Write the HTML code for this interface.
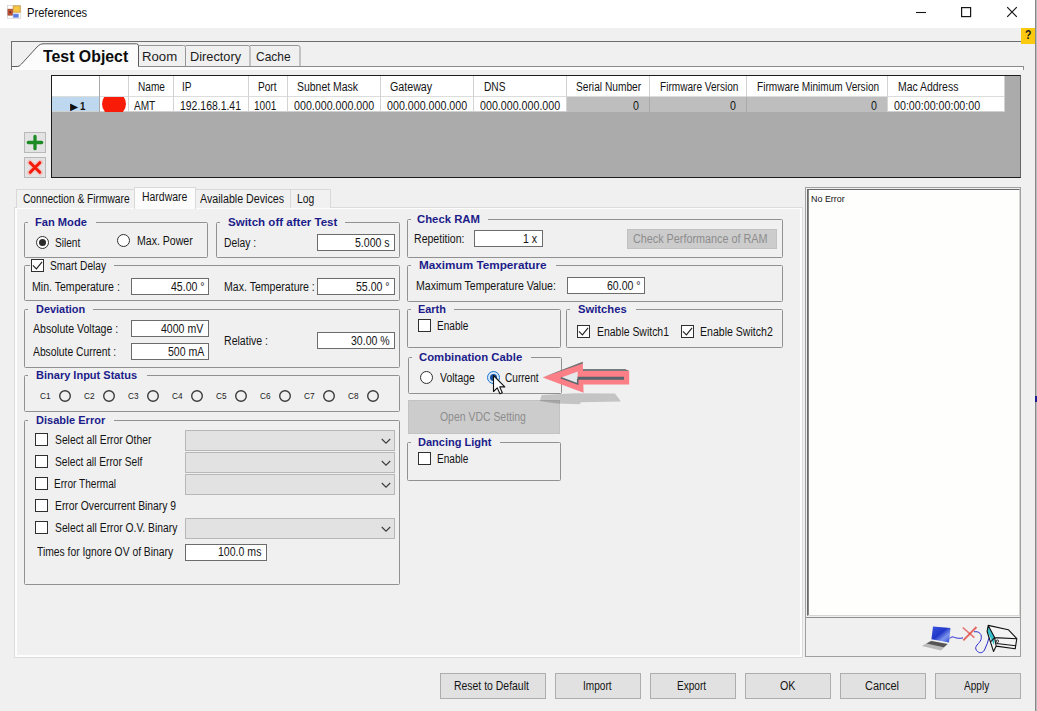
<!DOCTYPE html>
<html><head><meta charset="utf-8"><title>Preferences</title>
<style>
*{box-sizing:border-box;margin:0;padding:0}
html,body{width:1037px;height:711px;overflow:hidden}
body{position:relative;background:#f0f0f0;font-family:"Liberation Sans",sans-serif;font-size:12px;color:#141414}
.a{position:absolute}
.t{position:absolute;white-space:nowrap}
</style></head><body>
<div class="a" style="left:0px;top:0px;width:1037px;height:28px;background:#fff"></div>
<svg class="a" style="left:7px;top:5px" width="15" height="14" viewBox="7 5 15 14">
<rect x="7.500" y="5.500" width="13.200" height="12.800" fill="#fdfdfd" stroke="#d4d4d4" stroke-width="0.800"/>
<rect x="13.200" y="5.900" width="7" height="6.300" fill="#f6c740" stroke="#d09a48" stroke-width="0.900"/>
<rect x="8" y="9.300" width="4.300" height="5.800" fill="#d9552c" stroke="#9a4a30" stroke-width="0.900"/>
<rect x="9.300" y="11" width="1.800" height="2.400" fill="#6a3030"/>
<rect x="13.200" y="14" width="5.300" height="3.400" fill="#5a7be0" stroke="#8a9ae0" stroke-width="0.600"/>
</svg>
<div class="t" style="top:6px;font-size:12px;line-height:14px;height:14px;color:#111;left:27.3px;transform:scaleX(0.93);transform-origin:0 0;">Preferences</div>
<svg class="a" style="left:900px;top:0" width="135" height="28" viewBox="900 0 135 28">
<path d="M916 12.500h10" stroke="#161616" stroke-width="1.100" fill="none"/>
<rect x="961.600" y="7.600" width="9" height="9" stroke="#161616" stroke-width="1.200" fill="none"/>
<path d="M1007.200 7.200l9.600 9.600M1016.800 7.200l-9.600 9.600" stroke="#161616" stroke-width="1.200" fill="none"/>
</svg>
<div class="a" style="left:1035px;top:0px;width:1px;height:711px;background:#888"></div>
<div class="a" style="left:1036px;top:0px;width:1px;height:711px;background:#bcbcbc"></div>
<div class="a" style="left:1035px;top:396px;width:2px;height:6px;background:#1a1a90"></div>
<div class="a" style="left:1021px;top:28px;width:14px;height:16px;background:#fbca10"></div>
<div class="t" style="top:28px;font-size:12.5px;line-height:14px;height:14px;font-weight:bold;color:#1a1a1a;left:1024.69px;transform:scaleX(0.84);transform-origin:0 0;">?</div>
<div class="a" style="left:11px;top:41px;width:1010px;height:1px;background:#6e6e6e"></div>
<div class="a" style="left:11px;top:41px;width:1px;height:29px;background:#6e6e6e"></div>
<div class="a" style="left:12px;top:66px;width:1012px;height:4px;background:#fbfbfb"></div>
<div class="a" style="left:12px;top:66px;width:1012px;height:1px;background:#8c8c8c"></div>
<div class="a" style="left:1023px;top:66px;width:1px;height:4px;background:#8c8c8c"></div>
<svg class="a" style="left:11px;top:41px" width="300" height="29" viewBox="0 0 300 29">
<path d="M1 25.500H5C8 25.500 8.500 25 10.500 23L26 6C28.500 3.500 30 2.800 33 2.800H127.500V29H1Z" fill="#fcfcfc"/>
<path d="M1 25.500H5C8 25.500 8.500 25 10.500 23L26 6C28.500 3.500 30 2.800 33 2.800H125.500Q127.500 2.800 127.500 5V25.500" fill="none" stroke="#5a5a5a" stroke-width="1"/>
<path d="M127.500 4.500H172.500Q174.500 4.500 174.500 6.500V25" fill="none" stroke="#969696"/>
<path d="M174.500 4.500H237Q239 4.500 239 6.500V25" fill="none" stroke="#969696"/>
<path d="M239 4.500H287Q289 4.500 289 6.500V25" fill="none" stroke="#969696"/>
</svg>
<div class="t" style="top:47px;font-size:16.2px;line-height:18px;height:18px;font-weight:bold;color:#0c0c0c;left:43.3px;transform:scaleX(0.98);transform-origin:0 0;">Test Object</div>
<div class="t" style="top:49px;font-size:13.6px;line-height:15px;height:15px;color:#1c1c1c;left:142.3px;transform:scaleX(0.97);transform-origin:0 0;">Room</div>
<div class="t" style="top:49px;font-size:13.6px;line-height:15px;height:15px;color:#1c1c1c;left:189.7px;transform:scaleX(0.94);transform-origin:0 0;">Directory</div>
<div class="t" style="top:49px;font-size:13.6px;line-height:15px;height:15px;color:#1c1c1c;left:255.8px;transform:scaleX(0.88);transform-origin:0 0;">Cache</div>
<div class="a" style="left:51px;top:75px;width:970px;height:103px;background:#ababab;border:1px solid #1c1c1c;border-right-color:#666"></div>
<div class="a" style="left:52px;top:76px;width:953px;height:36px;background:#fff"></div>
<div class="a" style="left:52px;top:97px;width:47px;height:15px;background:#bed8ef"></div>
<div class="a" style="left:52px;top:96px;width:952px;height:1px;background:#dcdcdc"></div>
<div class="a" style="left:52px;top:111px;width:952px;height:1px;background:#d0d0d0"></div>
<div class="a" style="left:99px;top:76px;width:1px;height:36px;background:#a9a9a9"></div>
<div class="a" style="left:128px;top:76px;width:1px;height:36px;background:#d3d3d3"></div>
<div class="a" style="left:173px;top:76px;width:1px;height:36px;background:#d3d3d3"></div>
<div class="a" style="left:248px;top:76px;width:1px;height:36px;background:#d3d3d3"></div>
<div class="a" style="left:287px;top:76px;width:1px;height:36px;background:#d3d3d3"></div>
<div class="a" style="left:380px;top:76px;width:1px;height:36px;background:#d3d3d3"></div>
<div class="a" style="left:473px;top:76px;width:1px;height:36px;background:#d3d3d3"></div>
<div class="a" style="left:566px;top:76px;width:1px;height:36px;background:#d3d3d3"></div>
<div class="a" style="left:649px;top:76px;width:1px;height:36px;background:#d3d3d3"></div>
<div class="a" style="left:746px;top:76px;width:1px;height:36px;background:#d3d3d3"></div>
<div class="a" style="left:887px;top:76px;width:1px;height:36px;background:#d3d3d3"></div>
<div class="a" style="left:1004px;top:76px;width:1px;height:36px;background:#d3d3d3"></div>
<div class="a" style="left:567px;top:97px;width:320px;height:15px;background:#bebebe"></div>
<div class="a" style="left:649px;top:97px;width:1px;height:15px;background:#a9a9a9"></div>
<div class="a" style="left:746px;top:97px;width:1px;height:15px;background:#a9a9a9"></div>
<div class="a" style="left:101px;top:96.500px;width:26px;height:15.500px;overflow:hidden"><div style="margin:-4.500px 0 0 0.800px;width:24.400px;height:24.400px;background:#f81c08;border-radius:50%"></div></div>
<div class="t" style="top:101px;font-size:10px;line-height:11px;height:11px;color:#111;left:70px;transform:scaleX(1.06);transform-origin:0 0;">▶</div>
<div class="t" style="top:100px;font-size:11.5px;line-height:12px;height:12px;font-weight:bold;color:#111;left:79.71px;transform:scaleX(0.84);transform-origin:0 0;">1</div>
<div class="t" style="top:80px;font-size:12px;line-height:14px;height:14px;left:138.11px;transform:scaleX(0.84);transform-origin:0 0;">Name</div>
<div class="t" style="top:80px;font-size:12px;line-height:14px;height:14px;left:182.13px;transform:scaleX(0.84);transform-origin:0 0;">IP</div>
<div class="t" style="top:80px;font-size:12px;line-height:14px;height:14px;left:257.64px;transform:scaleX(0.84);transform-origin:0 0;">Port</div>
<div class="t" style="top:80px;font-size:12px;line-height:14px;height:14px;left:297px;transform:scaleX(0.87);transform-origin:0 0;">Subnet Mask</div>
<div class="t" style="top:80px;font-size:12px;line-height:14px;height:14px;left:389.5px;transform:scaleX(0.89);transform-origin:0 0;">Gateway</div>
<div class="t" style="top:80px;font-size:12px;line-height:14px;height:14px;left:483.5px;transform:scaleX(0.85);transform-origin:0 0;">DNS</div>
<div class="t" style="top:80px;font-size:12px;line-height:14px;height:14px;left:576.3px;transform:scaleX(0.85);transform-origin:0 0;">Serial Number</div>
<div class="t" style="top:80px;font-size:12px;line-height:14px;height:14px;left:659.5px;transform:scaleX(0.84);transform-origin:0 0;">Firmware Version</div>
<div class="t" style="top:80px;font-size:12px;line-height:14px;height:14px;left:756.75px;transform:scaleX(0.84);transform-origin:0 0;">Firmware Minimum Version</div>
<div class="t" style="top:80px;font-size:12px;line-height:14px;height:14px;left:897.8px;transform:scaleX(0.87);transform-origin:0 0;">Mac Address</div>
<div class="t" style="top:99px;font-size:12px;line-height:14px;height:14px;left:134.23px;transform:scaleX(0.84);transform-origin:0 0;">AMT</div>
<div class="t" style="top:99px;font-size:12px;line-height:14px;height:14px;left:179.6px;transform:scaleX(0.87);transform-origin:0 0;">192.168.1.41</div>
<div class="t" style="top:99px;font-size:12px;line-height:14px;height:14px;left:254.11px;transform:scaleX(0.84);transform-origin:0 0;">1001</div>
<div class="t" style="top:99px;font-size:12px;line-height:14px;height:14px;left:293.8px;transform:scaleX(0.89);transform-origin:0 0;">000.000.000.000</div>
<div class="t" style="top:99px;font-size:12px;line-height:14px;height:14px;left:387px;transform:scaleX(0.89);transform-origin:0 0;">000.000.000.000</div>
<div class="t" style="top:99px;font-size:12px;line-height:14px;height:14px;left:479.9px;transform:scaleX(0.89);transform-origin:0 0;">000.000.000.000</div>
<div class="t" style="top:99px;font-size:12px;line-height:14px;height:14px;left:633.3px;transform:scaleX(0.89);transform-origin:0 0;">0</div>
<div class="t" style="top:99px;font-size:12px;line-height:14px;height:14px;left:730px;transform:scaleX(0.89);transform-origin:0 0;">0</div>
<div class="t" style="top:99px;font-size:12px;line-height:14px;height:14px;left:871.1px;transform:scaleX(0.89);transform-origin:0 0;">0</div>
<div class="t" style="top:99px;font-size:12px;line-height:14px;height:14px;left:893.5px;transform:scaleX(0.89);transform-origin:0 0;">00:00:00:00:00:00</div>
<div class="a" style="left:24px;top:132px;width:22px;height:21px;background:#e3e3e3;border:1px solid #b9b9b9"></div>
<svg class="a" style="left:24px;top:132px" width="22" height="21" viewBox="0 0 22 21"><path d="M11 4.300v12.400M4.300 10.500h13.400" stroke="#1d8c25" stroke-width="3.300" stroke-linecap="round" fill="none"/></svg>
<div class="a" style="left:24px;top:157px;width:22px;height:21px;background:#e3e3e3;border:1px solid #b9b9b9"></div>
<svg class="a" style="left:24px;top:157px" width="22" height="21" viewBox="0 0 22 21"><path d="M5.800 5.300l10.400 10.400M16.200 5.300l-10.400 10.400" stroke="#ff9a9a" stroke-opacity="0.450" stroke-width="5.400" stroke-linecap="round" fill="none"/><path d="M6.200 5.700l9.600 9.600M15.800 5.700l-9.600 9.600" stroke="#f41a08" stroke-width="3" stroke-linecap="round" fill="none"/></svg>
<div class="a" style="left:14px;top:207px;width:789px;height:451px;border:1px solid #dcdcdc;background:#f0f0f0"></div>
<div class="a" style="left:15px;top:208px;width:787px;height:449px;border:2px solid #fdfdfd;border-top-width:1px"></div>
<div class="a" style="left:16px;top:189px;width:119px;height:19px;background:#f1f1f1;border:1px solid #d9d9d9;border-bottom:none"></div>
<div class="a" style="left:195px;top:189px;width:96px;height:19px;background:#f1f1f1;border:1px solid #d9d9d9;border-bottom:none"></div>
<div class="a" style="left:290px;top:189px;width:41px;height:19px;background:#f1f1f1;border:1px solid #d9d9d9;border-bottom:none"></div>
<div class="a" style="left:134px;top:187px;width:62px;height:22px;background:#fcfcfc;border:1px solid #d9d9d9;border-bottom:none"></div>
<div class="t" style="top:192px;font-size:12px;line-height:14px;height:14px;left:23.3px;transform:scaleX(0.85);transform-origin:0 0;">Connection &amp; Firmware</div>
<div class="t" style="top:190px;font-size:12px;line-height:14px;height:14px;left:142.3px;transform:scaleX(0.87);transform-origin:0 0;">Hardware</div>
<div class="t" style="top:192px;font-size:12px;line-height:14px;height:14px;left:200px;transform:scaleX(0.89);transform-origin:0 0;">Available Devices</div>
<div class="t" style="top:192px;font-size:12px;line-height:14px;height:14px;left:297.3px;transform:scaleX(0.86);transform-origin:0 0;">Log</div>
<div class="a" style="left:24px;top:222px;width:184px;height:36px;border:1px solid #919191;border-radius:1.5px"></div>
<div class="a" style="left:28px;top:221px;width:68px;height:3px;background:#f0f0f0"></div>
<div class="t" style="top:217px;font-size:10.3px;line-height:11px;height:11px;font-weight:bold;color:#1c1c8a;left:35.3px;transform:scaleX(1.08);transform-origin:0 0;">Fan Mode</div>
<div class="a" style="left:36px;top:235.8px;width:13px;height:13px;background:#fff;border:1px solid #2f2f2f;border-radius:50%"></div>
<div class="a" style="left:39px;top:238.8px;width:7px;height:7px;background:#2a2a2a;border-radius:50%"></div>
<div class="t" style="top:236px;font-size:12px;line-height:14px;height:14px;left:54.73px;transform:scaleX(0.84);transform-origin:0 0;">Silent</div>
<div class="a" style="left:117px;top:234px;width:13px;height:13px;background:#fff;border:1px solid #2f2f2f;border-radius:50%"></div>
<div class="t" style="top:234px;font-size:12px;line-height:14px;height:14px;left:136.6px;transform:scaleX(0.88);transform-origin:0 0;">Max. Power</div>
<div class="a" style="left:216px;top:222px;width:184px;height:36px;border:1px solid #919191;border-radius:1.5px"></div>
<div class="a" style="left:220px;top:221px;width:125px;height:3px;background:#f0f0f0"></div>
<div class="t" style="top:217px;font-size:10.3px;line-height:11px;height:11px;font-weight:bold;color:#1c1c8a;left:228.2px;transform:scaleX(1.12);transform-origin:0 0;">Switch off after Test</div>
<div class="t" style="top:236px;font-size:12px;line-height:14px;height:14px;left:223.8px;transform:scaleX(0.86);transform-origin:0 0;">Delay :</div>
<div class="a" style="left:317px;top:234px;width:78px;height:17px;background:#fff;border:1px solid #6c6c6c"></div>
<div class="t" style="top:236px;font-size:12px;line-height:14px;height:14px;left:355.08px;transform:scaleX(0.88);transform-origin:0 0;">5.000 s</div>
<div class="a" style="left:24px;top:265px;width:376px;height:36px;border:1px solid #919191;border-radius:1.5px"></div>
<div class="a" style="left:30px;top:264px;width:84px;height:3px;background:#f0f0f0"></div>
<div class="a" style="left:31px;top:259px;width:13px;height:13px;background:#fff;border:1px solid #2f2f2f"></div>
<svg class="a" style="left:31px;top:259px" width="13" height="13" viewBox="0 0 13 13"><path d="M1.900 6.400L5.400 9.800L11.100 2.800" fill="none" stroke="#222" stroke-width="1.150"/></svg>
<div class="t" style="top:259px;font-size:12px;line-height:14px;height:14px;left:50.4px;transform:scaleX(0.85);transform-origin:0 0;">Smart Delay</div>
<div class="t" style="top:280px;font-size:12px;line-height:14px;height:14px;left:31.5px;transform:scaleX(0.88);transform-origin:0 0;">Min. Temperature :</div>
<div class="a" style="left:131px;top:278px;width:78px;height:17px;background:#fff;border:1px solid #6c6c6c"></div>
<div class="t" style="top:280px;font-size:12px;line-height:14px;height:14px;left:170.76px;transform:scaleX(0.88);transform-origin:0 0;">45.00 °</div>
<div class="t" style="top:280px;font-size:12px;line-height:14px;height:14px;left:223.8px;transform:scaleX(0.88);transform-origin:0 0;">Max. Temperature :</div>
<div class="a" style="left:317px;top:278px;width:78px;height:17px;background:#fff;border:1px solid #6c6c6c"></div>
<div class="t" style="top:280px;font-size:12px;line-height:14px;height:14px;left:355.96px;transform:scaleX(0.88);transform-origin:0 0;">55.00 °</div>
<div class="a" style="left:24px;top:309px;width:376px;height:59px;border:1px solid #919191;border-radius:1.5px"></div>
<div class="a" style="left:28px;top:308px;width:64.5px;height:3px;background:#f0f0f0"></div>
<div class="t" style="top:304px;font-size:10.3px;line-height:11px;height:11px;font-weight:bold;color:#1c1c8a;left:35.5px;transform:scaleX(1.06);transform-origin:0 0;">Deviation</div>
<div class="t" style="top:322px;font-size:12px;line-height:14px;height:14px;left:33.3px;transform:scaleX(0.88);transform-origin:0 0;">Absolute Voltage :</div>
<div class="a" style="left:131px;top:320px;width:78px;height:17px;background:#fff;border:1px solid #6c6c6c"></div>
<div class="t" style="top:322px;font-size:12px;line-height:14px;height:14px;left:161.46px;transform:scaleX(0.88);transform-origin:0 0;">4000 mV</div>
<div class="t" style="top:345px;font-size:12px;line-height:14px;height:14px;left:33.3px;transform:scaleX(0.86);transform-origin:0 0;">Absolute Current :</div>
<div class="a" style="left:131px;top:343px;width:78px;height:17px;background:#fff;border:1px solid #6c6c6c"></div>
<div class="t" style="top:345px;font-size:12px;line-height:14px;height:14px;left:167.62px;transform:scaleX(0.88);transform-origin:0 0;">500 mA</div>
<div class="t" style="top:334px;font-size:12px;line-height:14px;height:14px;left:223.5px;transform:scaleX(0.88);transform-origin:0 0;">Relative :</div>
<div class="a" style="left:317px;top:332px;width:78px;height:17px;background:#fff;border:1px solid #6c6c6c"></div>
<div class="t" style="top:334px;font-size:12px;line-height:14px;height:14px;left:350.68px;transform:scaleX(0.88);transform-origin:0 0;">30.00 %</div>
<div class="a" style="left:24px;top:375px;width:376px;height:37px;border:1px solid #919191;border-radius:1.5px"></div>
<div class="a" style="left:28px;top:374px;width:118.5px;height:3px;background:#f0f0f0"></div>
<div class="t" style="top:370px;font-size:10.3px;line-height:11px;height:11px;font-weight:bold;color:#1c1c8a;left:35.5px;transform:scaleX(1.07);transform-origin:0 0;">Binary Input Status</div>
<div class="t" style="top:390px;font-size:9.5px;line-height:11px;height:11px;color:#222;left:40px;transform:scaleX(0.87);transform-origin:0 0;">C1</div>
<svg class="a" style="left:58px;top:389px" width="14" height="14"><circle cx="7" cy="7" r="5.300" fill="none" stroke="#3a3a3a" stroke-width="1.400"/></svg>
<div class="t" style="top:390px;font-size:9.5px;line-height:11px;height:11px;color:#222;left:84px;transform:scaleX(0.87);transform-origin:0 0;">C2</div>
<svg class="a" style="left:102px;top:389px" width="14" height="14"><circle cx="7" cy="7" r="5.300" fill="none" stroke="#3a3a3a" stroke-width="1.400"/></svg>
<div class="t" style="top:390px;font-size:9.5px;line-height:11px;height:11px;color:#222;left:128px;transform:scaleX(0.87);transform-origin:0 0;">C3</div>
<svg class="a" style="left:146px;top:389px" width="14" height="14"><circle cx="7" cy="7" r="5.300" fill="none" stroke="#3a3a3a" stroke-width="1.400"/></svg>
<div class="t" style="top:390px;font-size:9.5px;line-height:11px;height:11px;color:#222;left:172px;transform:scaleX(0.87);transform-origin:0 0;">C4</div>
<svg class="a" style="left:190px;top:389px" width="14" height="14"><circle cx="7" cy="7" r="5.300" fill="none" stroke="#3a3a3a" stroke-width="1.400"/></svg>
<div class="t" style="top:390px;font-size:9.5px;line-height:11px;height:11px;color:#222;left:216px;transform:scaleX(0.87);transform-origin:0 0;">C5</div>
<svg class="a" style="left:234px;top:389px" width="14" height="14"><circle cx="7" cy="7" r="5.300" fill="none" stroke="#3a3a3a" stroke-width="1.400"/></svg>
<div class="t" style="top:390px;font-size:9.5px;line-height:11px;height:11px;color:#222;left:260px;transform:scaleX(0.87);transform-origin:0 0;">C6</div>
<svg class="a" style="left:278px;top:389px" width="14" height="14"><circle cx="7" cy="7" r="5.300" fill="none" stroke="#3a3a3a" stroke-width="1.400"/></svg>
<div class="t" style="top:390px;font-size:9.5px;line-height:11px;height:11px;color:#222;left:304px;transform:scaleX(0.87);transform-origin:0 0;">C7</div>
<svg class="a" style="left:322px;top:389px" width="14" height="14"><circle cx="7" cy="7" r="5.300" fill="none" stroke="#3a3a3a" stroke-width="1.400"/></svg>
<div class="t" style="top:390px;font-size:9.5px;line-height:11px;height:11px;color:#222;left:348px;transform:scaleX(0.87);transform-origin:0 0;">C8</div>
<svg class="a" style="left:366px;top:389px" width="14" height="14"><circle cx="7" cy="7" r="5.300" fill="none" stroke="#3a3a3a" stroke-width="1.400"/></svg>
<div class="a" style="left:24px;top:420px;width:376px;height:165px;border:1px solid #919191;border-radius:1.5px"></div>
<div class="a" style="left:28px;top:419px;width:86px;height:3px;background:#f0f0f0"></div>
<div class="t" style="top:415px;font-size:10.3px;line-height:11px;height:11px;font-weight:bold;color:#1c1c8a;left:35.5px;transform:scaleX(1.07);transform-origin:0 0;">Disable Error</div>
<div class="a" style="left:35px;top:433px;width:13px;height:13px;background:#fff;border:1px solid #2f2f2f"></div>
<div class="t" style="top:433px;font-size:12px;line-height:14px;height:14px;left:54.6px;transform:scaleX(0.86);transform-origin:0 0;">Select all Error Other</div>
<div class="a" style="left:185px;top:430px;width:210px;height:21px;background:#e2e2e2;border:1px solid #b7b7b7"></div>
<svg class="a" style="left:380.9px;top:438px" width="10" height="7" viewBox="0 0 10 7"><path d="M0.800 1L5 5.200L9.200 1" fill="none" stroke="#3c3c3c" stroke-width="1.100"/></svg>
<div class="a" style="left:35px;top:455px;width:13px;height:13px;background:#fff;border:1px solid #2f2f2f"></div>
<div class="t" style="top:455px;font-size:12px;line-height:14px;height:14px;left:54.6px;transform:scaleX(0.85);transform-origin:0 0;">Select all Error Self</div>
<div class="a" style="left:185px;top:452px;width:210px;height:21px;background:#e2e2e2;border:1px solid #b7b7b7"></div>
<svg class="a" style="left:380.9px;top:460px" width="10" height="7" viewBox="0 0 10 7"><path d="M0.800 1L5 5.200L9.200 1" fill="none" stroke="#3c3c3c" stroke-width="1.100"/></svg>
<div class="a" style="left:35px;top:477px;width:13px;height:13px;background:#fff;border:1px solid #2f2f2f"></div>
<div class="t" style="top:477px;font-size:12px;line-height:14px;height:14px;left:54.47px;transform:scaleX(0.84);transform-origin:0 0;">Error Thermal</div>
<div class="a" style="left:185px;top:474px;width:210px;height:21px;background:#e2e2e2;border:1px solid #b7b7b7"></div>
<svg class="a" style="left:380.9px;top:482px" width="10" height="7" viewBox="0 0 10 7"><path d="M0.800 1L5 5.200L9.200 1" fill="none" stroke="#3c3c3c" stroke-width="1.100"/></svg>
<div class="a" style="left:35px;top:499px;width:13px;height:13px;background:#fff;border:1px solid #2f2f2f"></div>
<div class="t" style="top:499px;font-size:12px;line-height:14px;height:14px;left:54.6px;transform:scaleX(0.86);transform-origin:0 0;">Error Overcurrent Binary 9</div>
<div class="a" style="left:35px;top:521px;width:13px;height:13px;background:#fff;border:1px solid #2f2f2f"></div>
<div class="t" style="top:521px;font-size:12px;line-height:14px;height:14px;left:54.6px;transform:scaleX(0.86);transform-origin:0 0;">Select all Error O.V. Binary</div>
<div class="a" style="left:185px;top:518px;width:210px;height:21px;background:#e2e2e2;border:1px solid #b7b7b7"></div>
<svg class="a" style="left:380.9px;top:526px" width="10" height="7" viewBox="0 0 10 7"><path d="M0.800 1L5 5.200L9.200 1" fill="none" stroke="#3c3c3c" stroke-width="1.100"/></svg>
<div class="t" style="top:545px;font-size:12px;line-height:14px;height:14px;left:36.8px;transform:scaleX(0.86);transform-origin:0 0;">Times for Ignore OV of Binary</div>
<div class="a" style="left:185px;top:544px;width:82px;height:17px;background:#fff;border:1px solid #6c6c6c"></div>
<div class="t" style="top:545px;font-size:12px;line-height:14px;height:14px;left:218.28px;transform:scaleX(0.88);transform-origin:0 0;">100.0 ms</div>
<div class="a" style="left:407px;top:219px;width:376px;height:39px;border:1px solid #919191;border-radius:1.5px"></div>
<div class="a" style="left:411px;top:218px;width:77px;height:3px;background:#f0f0f0"></div>
<div class="t" style="top:214px;font-size:10.3px;line-height:11px;height:11px;font-weight:bold;color:#1c1c8a;left:417px;transform:scaleX(1.1);transform-origin:0 0;">Check RAM</div>
<div class="t" style="top:232px;font-size:12px;line-height:14px;height:14px;left:413.8px;transform:scaleX(0.88);transform-origin:0 0;">Repetition:</div>
<div class="a" style="left:474px;top:230px;width:69px;height:17px;background:#fff;border:1px solid #6c6c6c"></div>
<div class="t" style="top:232px;font-size:12px;line-height:14px;height:14px;left:523.22px;transform:scaleX(0.88);transform-origin:0 0;">1 x</div>
<div class="a" style="left:627px;top:229px;width:150px;height:20px;background:#cccccc;border:1px solid #c2c2c2"></div>
<div class="t" style="top:232px;font-size:12px;line-height:14px;height:14px;color:#8c8c8c;left:633.2px;transform:scaleX(0.9);transform-origin:0 0;">Check Performance of RAM</div>
<div class="a" style="left:407px;top:265px;width:376px;height:37px;border:1px solid #919191;border-radius:1.5px"></div>
<div class="a" style="left:411px;top:264px;width:144.5px;height:3px;background:#f0f0f0"></div>
<div class="t" style="top:260px;font-size:10.3px;line-height:11px;height:11px;font-weight:bold;color:#1c1c8a;left:418.8px;transform:scaleX(1.14);transform-origin:0 0;">Maximum Temperature</div>
<div class="t" style="top:279px;font-size:12px;line-height:14px;height:14px;left:415.5px;transform:scaleX(0.88);transform-origin:0 0;">Maximum Temperature Value:</div>
<div class="a" style="left:567px;top:277px;width:78px;height:17px;background:#fff;border:1px solid #6c6c6c"></div>
<div class="t" style="top:279px;font-size:12px;line-height:14px;height:14px;left:607.16px;transform:scaleX(0.88);transform-origin:0 0;">60.00 °</div>
<div class="a" style="left:407px;top:309px;width:154px;height:39px;border:1px solid #919191;border-radius:1.5px"></div>
<div class="a" style="left:411px;top:308px;width:43px;height:3px;background:#f0f0f0"></div>
<div class="t" style="top:304px;font-size:10.3px;line-height:11px;height:11px;font-weight:bold;color:#1c1c8a;left:418px;transform:scaleX(1.06);transform-origin:0 0;">Earth</div>
<div class="a" style="left:418px;top:319px;width:13px;height:13px;background:#fff;border:1px solid #2f2f2f"></div>
<div class="t" style="top:319px;font-size:12px;line-height:14px;height:14px;left:437.29px;transform:scaleX(0.84);transform-origin:0 0;">Enable</div>
<div class="a" style="left:566px;top:309px;width:217px;height:39px;border:1px solid #919191;border-radius:1.5px"></div>
<div class="a" style="left:570px;top:308px;width:66px;height:3px;background:#f0f0f0"></div>
<div class="t" style="top:304px;font-size:10.3px;line-height:11px;height:11px;font-weight:bold;color:#1c1c8a;left:578px;transform:scaleX(1.09);transform-origin:0 0;">Switches</div>
<div class="a" style="left:577px;top:325px;width:13px;height:13px;background:#fff;border:1px solid #2f2f2f"></div>
<svg class="a" style="left:577px;top:325px" width="13" height="13" viewBox="0 0 13 13"><path d="M1.900 6.400L5.400 9.800L11.100 2.800" fill="none" stroke="#222" stroke-width="1.150"/></svg>
<div class="t" style="top:325px;font-size:12px;line-height:14px;height:14px;left:596.8px;transform:scaleX(0.87);transform-origin:0 0;">Enable Switch1</div>
<div class="a" style="left:681px;top:325px;width:13px;height:13px;background:#fff;border:1px solid #2f2f2f"></div>
<svg class="a" style="left:681px;top:325px" width="13" height="13" viewBox="0 0 13 13"><path d="M1.900 6.400L5.400 9.800L11.100 2.800" fill="none" stroke="#222" stroke-width="1.150"/></svg>
<div class="t" style="top:325px;font-size:12px;line-height:14px;height:14px;left:700.4px;transform:scaleX(0.88);transform-origin:0 0;">Enable Switch2</div>
<div class="a" style="left:408px;top:357px;width:154px;height:37px;border:1px solid #919191;border-radius:1.5px"></div>
<div class="a" style="left:412px;top:356px;width:119px;height:3px;background:#f0f0f0"></div>
<div class="t" style="top:352px;font-size:10.3px;line-height:11px;height:11px;font-weight:bold;color:#1c1c8a;left:419.3px;transform:scaleX(1.1);transform-origin:0 0;">Combination Cable</div>
<div class="a" style="left:419.8px;top:371.2px;width:13px;height:13px;background:#fff;border:1px solid #2f2f2f;border-radius:50%"></div>
<div class="t" style="top:371px;font-size:12px;line-height:14px;height:14px;left:439.6px;transform:scaleX(0.87);transform-origin:0 0;">Voltage</div>
<div class="a" style="left:487px;top:371.2px;width:13px;height:13px;background:#d6e9fa;border:1.500px solid #1b72d2;border-radius:50%"></div>
<div class="a" style="left:490px;top:374.2px;width:7px;height:7px;background:#174f9c;border-radius:50%"></div>
<div class="t" style="top:371px;font-size:12px;line-height:14px;height:14px;left:505.18px;transform:scaleX(0.84);transform-origin:0 0;">Current</div>
<div class="a" style="left:408px;top:400px;width:152px;height:34px;background:#cccccc;border:1px solid #c2c2c2"></div>
<div class="t" style="top:410px;font-size:12px;line-height:14px;height:14px;color:#8c8c8c;left:439.6px;transform:scaleX(0.87);transform-origin:0 0;">Open VDC Setting</div>
<div class="a" style="left:407px;top:442px;width:154px;height:39px;border:1px solid #919191;border-radius:1.5px"></div>
<div class="a" style="left:411px;top:441px;width:89px;height:3px;background:#f0f0f0"></div>
<div class="t" style="top:437px;font-size:10.3px;line-height:11px;height:11px;font-weight:bold;color:#1c1c8a;left:418.3px;transform:scaleX(1.07);transform-origin:0 0;">Dancing Light</div>
<div class="a" style="left:418px;top:452px;width:13px;height:13px;background:#fff;border:1px solid #2f2f2f"></div>
<div class="t" style="top:452px;font-size:12px;line-height:14px;height:14px;left:437.29px;transform:scaleX(0.84);transform-origin:0 0;">Enable</div>
<div class="a" style="left:805px;top:187px;width:216px;height:470px;border:1px solid #a0a0a0;background:#f0f0f0"></div>
<div class="a" style="left:807px;top:189px;width:213px;height:427px;background:#fefefd;border:1px solid #d6d6d6;border-top-color:#6a6a6a;border-left-color:#6a6a6a"></div>
<div class="a" style="left:806px;top:617px;width:214px;height:1px;background:#8e8e8e"></div>
<div class="a" style="left:808px;top:190px;width:1px;height:425px;background:#8a8a8a"></div>
<div class="t" style="top:194px;font-size:9.3px;line-height:10px;height:10px;left:810.6px;transform:scaleX(0.96);transform-origin:0 0;">No Error</div>
<div class="a" style="left:440px;top:673px;width:106px;height:26px;background:#e1e1e1;border:1px solid #adadad"></div>
<div class="t" style="top:679px;font-size:12px;line-height:14px;height:14px;left:454.3px;transform:scaleX(0.87);transform-origin:0 0;">Reset to Default</div>
<div class="a" style="left:555px;top:673px;width:86px;height:26px;background:#e1e1e1;border:1px solid #adadad"></div>
<div class="t" style="top:679px;font-size:12px;line-height:14px;height:14px;left:582.5px;transform:scaleX(0.84);transform-origin:0 0;">Import</div>
<div class="a" style="left:650px;top:673px;width:86px;height:26px;background:#e1e1e1;border:1px solid #adadad"></div>
<div class="t" style="top:679px;font-size:12px;line-height:14px;height:14px;left:676.75px;transform:scaleX(0.84);transform-origin:0 0;">Export</div>
<div class="a" style="left:745px;top:673px;width:86px;height:26px;background:#e1e1e1;border:1px solid #adadad"></div>
<div class="t" style="top:679px;font-size:12px;line-height:14px;height:14px;left:779.9px;transform:scaleX(0.89);transform-origin:0 0;">OK</div>
<div class="a" style="left:840px;top:673px;width:86px;height:26px;background:#e1e1e1;border:1px solid #adadad"></div>
<div class="t" style="top:679px;font-size:12px;line-height:14px;height:14px;left:865.4px;transform:scaleX(0.91);transform-origin:0 0;">Cancel</div>
<div class="a" style="left:935px;top:673px;width:86px;height:26px;background:#e1e1e1;border:1px solid #adadad"></div>
<div class="t" style="top:679px;font-size:12px;line-height:14px;height:14px;left:964px;transform:scaleX(0.84);transform-origin:0 0;">Apply</div>
<svg class="a" style="left:530px;top:355px" width="110" height="55" viewBox="530 355 110 55">
<polygon points="541.500,395 575,393.300 615,393.500 621,401.600 581,402.200 579.500,404.300 556,403.600 540,401" fill="#000" fill-opacity="0.180"/>
<path d="M542.700 377.600L582.700 361.900L583 369.300H625L629.200 370.900V384.500H583.300L583.600 392.700Z" fill="#fb7a81" fill-opacity="0.960"/>
<path d="M543.500 377L582.700 361.700L582.900 363.400Z" fill="#6e7577"/>
<path d="M583 369H625L629.200 370.900H583Z" fill="#767c7e"/>
<polygon points="560.800,377.800 577.700,371.400 577.700,383.900" fill="#e4e8ea"/>
<path d="M560.800 377.800L577.700 383.900V379" fill="none" stroke="#59646b" stroke-width="1.500"/>
<path d="M577.500 378.200H624" stroke="#56646d" stroke-width="3"/>
</svg>
<svg class="a" style="left:492px;top:374px" width="16" height="22" viewBox="0 0 16 22">
<path d="M1.500 1.500V17.500L5.300 13.900L7.900 19.800L10.300 18.700L7.700 12.900H12.800Z" fill="#fff" stroke="#111" stroke-width="1.100" stroke-linejoin="round"/>
</svg>
<svg class="a" style="left:915px;top:618px" width="110" height="40" viewBox="915 618 110 40">
<defs><linearGradient id="lg1" x1="0" y1="0" x2="1" y2="1"><stop offset="0" stop-color="#3a55e0"/><stop offset="0.450" stop-color="#2238c8"/><stop offset="0.700" stop-color="#7d95ee"/><stop offset="1" stop-color="#2a44d2"/></linearGradient></defs>
<polygon points="921.900,646.100 930.900,640.800 947.900,644 941,650.400" fill="#b9b9b9"/>
<polygon points="926.500,643.500 931.300,640.900 947.500,644 943.800,647.300" fill="#555"/>
<polygon points="933,626.500 950.500,628 949,642.400 931.400,639.200" fill="url(#lg1)"/>
<path d="M949.500 638.700C951.500 636.600 952.500 636.600 954.500 637.400S960 638.800 963 637.800" fill="none" stroke="#2a2ad2" stroke-width="1"/>
<path d="M974 631.800C979 631 982.500 634 981 639.500C979.500 644 973.500 646 976.500 650.500C979 653.500 982.500 653.500 984.500 650C986.500 646 988 641.500 989.300 637" fill="none" stroke="#2a2ad2" stroke-width="1"/>
<path d="M962.700 627.500L974.400 637.600" stroke="#e2403a" stroke-width="1.600" stroke-opacity="0.700" fill="none"/>
<path d="M976.500 627L963.300 640.300" stroke="#de3a34" stroke-width="1.900" stroke-opacity="0.750" fill="none"/>
<polygon points="988.200,625.400 1008.300,629.700 1016.800,638.700 1015.200,648.800 996.200,646.100 993.500,651.400 987.100,631.500" fill="#f4f4f4"/>
<polygon points="988.200,625.400 994.600,637.600 994,645 987.300,631.500" fill="#35c0cc"/>
<path d="M988.200 625.400L1008.300 629.700L1016.800 638.700L994.600 637.600ZM1016.800 638.700L1015.200 648.800L996.200 646.100L994.600 637.600M996.500 643.500L1015.700 645.800M988.200 625.400L987.100 631.500L993.500 651.400L996.200 646.100M990.500 642L994.600 637.600" fill="none" stroke="#111" stroke-width="1.100" stroke-linejoin="round"/>
<circle cx="997.400" cy="641.200" r="1.200" fill="#fff" stroke="#111" stroke-width="0.900"/>
</svg>
</body></html>
